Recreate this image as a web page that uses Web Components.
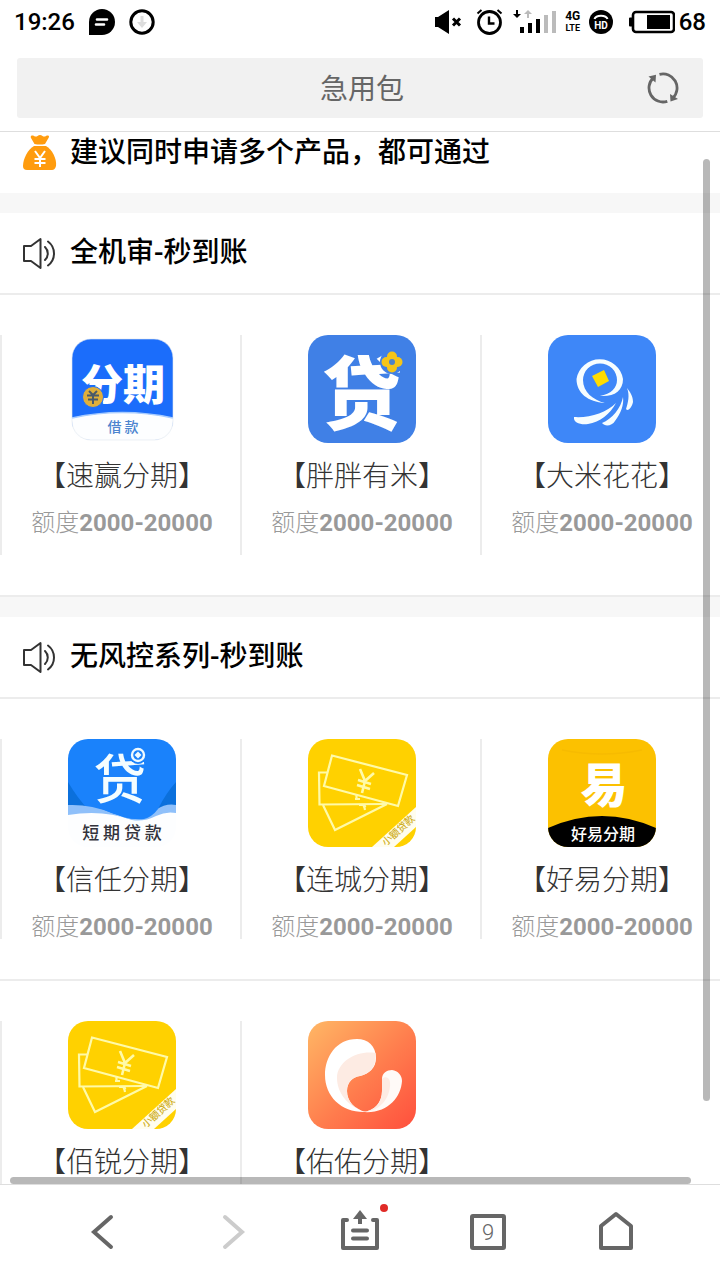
<!DOCTYPE html>
<html lang="zh-CN">
<head>
    <meta charset="UTF-8">
    <meta name="viewport" content="width=device-width, initial-scale=1">
    <title>急用包</title>
    <style>
        body {
            margin: 0;
            background: #fff;
            color: #000;
            font-family: Roboto, "Noto Sans CJK SC", sans-serif;
        }
    </style>
</head>
<body>
    <app-shell>
        <status-bar slot="top"></status-bar>
        <address-bar slot="top">急用包</address-bar>

        <section-title icon="bag">建议同时申请多个产品，都可通过</section-title>

        <loan-section>
            <section-title slot="title" icon="sound">全机审-秒到账</section-title>
            <loan-row class="tall">
                <loan-item logo="fenqi" name="【速赢分期】"></loan-item>
                <loan-item logo="dai" name="【胖胖有米】"></loan-item>
                <loan-item logo="rice" name="【大米花花】"></loan-item>
            </loan-row>
        </loan-section>

        <loan-section>
            <section-title slot="title" icon="sound">无风控系列-秒到账</section-title>
            <loan-row>
                <loan-item logo="shortdai" name="【信任分期】"></loan-item>
                <loan-item logo="notes" name="【连城分期】"></loan-item>
                <loan-item logo="yi" name="【好易分期】"></loan-item>
            </loan-row>
            <loan-row>
                <loan-item logo="notes" name="【佰锐分期】"></loan-item>
                <loan-item logo="swirl" name="【佑佑分期】"></loan-item>
            </loan-row>
        </loan-section>

        <nav-bar slot="bottom"></nav-bar>
    </app-shell>

    <script>
        class AppShell extends HTMLElement {
            constructor() {
                super();
                const shadow = this.attachShadow({ mode: 'open' });

                shadow.innerHTML = `
                    <style>
                        :host {
                            display: flex;
                            flex-direction: column;
                            height: 100vh;
                        }

                        header {
                            border-bottom: 1px solid #dedede;
                        }

                        main {
                            position: relative;
                            flex: 1;
                            min-height: 0;
                            overflow: hidden;
                        }

                        /* scroll thumbs lie over the content */
                        .thumb {
                            position: absolute;
                            border-radius: 4px;
                            background: rgba(0, 0, 0, 0.28);
                        }

                        .thumb.y {
                            top: 27px;
                            right: 10px;
                            bottom: 83px;
                            width: 7px;
                        }

                        .thumb.x {
                            left: 10px;
                            right: 29px;
                            bottom: 0;
                            height: 7px;
                        }
                    </style>

                    <header><slot name="top"></slot></header>
                    <main>
                        <slot></slot>
                        <div class="thumb y"></div>
                        <div class="thumb x"></div>
                    </main>
                    <slot name="bottom"></slot>
                `;
            }
        }

        class StatusBar extends HTMLElement {
            constructor() {
                super();
                const shadow = this.attachShadow({ mode: 'open' });

                shadow.innerHTML = `
                    <style>
                        :host {
                            display: flex;
                            align-items: center;
                            justify-content: space-between;
                            height: 44px;
                            padding: 0 14px;
                            font-size: 24px;
                            font-weight: 500;
                        }

                        .side {
                            display: flex;
                            align-items: center;
                            gap: 4px;
                        }

                        .side.left {
                            gap: 14px;
                        }

                        svg {
                            display: block;
                        }

                        .net {
                            width: 22px;
                            font-size: 12px;
                            font-weight: 700;
                            line-height: 13px;
                            text-align: center;
                        }

                        .net small {
                            display: block;
                            font-size: 9px;
                            line-height: 11px;
                        }
                    </style>

                    <div class="side left">
                        <span>19:26</span>
                        <svg width="26" height="26" viewBox="0 0 26 26">
                            <path d="M0 26V13A13 13 0 1 1 13 26Z"/>
                            <path d="M8 10.500H18M7 15.500H15" stroke="#fff" stroke-width="2.600" stroke-linecap="round"/>
                        </svg>
                        <svg width="26" height="26" viewBox="0 0 26 26">
                            <circle cx="13" cy="13" r="11.200" fill="none" stroke="#000" stroke-width="3"/>
                            <path d="M11.500 7h3v6h3.500l-5 6l-5-6h3.500Z" fill="#ddd"/>
                        </svg>
                    </div>
                    <div class="side">
                        <svg width="32" height="26" viewBox="0 0 32 26">
                            <path d="M1 8H4L15 1V25L4 18H1Z"/>
                            <path d="M19 9.500l7 7M26 9.500l-7 7" stroke="#000" stroke-width="3"/>
                        </svg>
                        <svg width="36" height="26" viewBox="0 0 36 26" fill="none" stroke="#000">
                            <circle cx="19.500" cy="13.500" r="11" stroke-width="2.800"/>
                            <path d="M19 7.500v7h5.500" stroke-width="2.400"/>
                            <path d="M7.500 4.500l4-3.500M31.500 4.500l-4-3.500" stroke-width="2"/>
                        </svg>
                        <svg width="48" height="26" viewBox="0 0 48 26">
                            <path d="M10 18h4v6h-4zM18 14h4v10h-4zM26 10h4v14h-4z"/>
                            <path d="M34 6h4v18h-4zM42 2h4v22h-4z" fill="#bbb"/>
                            <path d="M6 1h2v4h3l-4 4l-4-4h3z"/>
                            <path d="M17 9h2V5h3l-4-4l-4 4h3z" fill="#bbb"/>
                        </svg>
                        <div class="net">4G<small>LTE</small></div>
                        <svg width="26" height="26" viewBox="0 0 26 26">
                            <circle cx="13" cy="13" r="12"/>
                            <path d="M6.500 10C8 5.500 18 5.500 19.500 10" fill="none" stroke="#fff" stroke-width="2"/>
                            <text x="13" y="19.500" fill="#fff" font-family="Roboto, sans-serif" font-size="10" font-weight="700" text-anchor="middle">HD</text>
                        </svg>
                        <svg width="57" height="26" viewBox="0 0 57 26">
                            <rect x="15" y="3" width="41" height="20" rx="3" fill="none" stroke="#000" stroke-width="2.600"/>
                            <path d="M14 8.500h-2q-1 0-1 1v7q0 1 1 1h2zM29 6h23v14h-23z"/>
                        </svg>
                        <span>68</span>
                    </div>
                `;
            }
        }

        class AddressBar extends HTMLElement {
            constructor() {
                super();
                const shadow = this.attachShadow({ mode: 'open' });

                shadow.innerHTML = `
                    <style>
                        :host {
                            display: grid;
                            grid-template-columns: 64px 1fr 64px;
                            align-items: center;
                            height: 60px;
                            margin: 14px 17px 13px;
                            border-radius: 3px;
                            background: #f1f1f1;
                            color: #666;
                        }

                        button {
                            padding: 0;
                            border: 0;
                            background: none;
                            color: inherit;
                            font: inherit;
                        }

                        .title {
                            grid-column: 2;
                            padding: 4px 0 0 4px;
                            font-size: 28px;
                            line-height: 40px;
                        }

                        .reload {
                            height: 60px;
                            padding-right: 16px;
                        }

                        svg {
                            display: block;
                            margin: auto;
                        }
                    </style>

                    <button class="title"><slot></slot></button>
                    <button class="reload" aria-label="刷新">
                        <svg width="32" height="32" viewBox="0 0 32 32" fill="none" stroke="#666" stroke-width="2.800">
                            <path d="M20.300 29.300A14 14 0 0 1 6.600 5.600M12.500 2.400A14 14 0 0 1 25.900 25.900"/>
                            <path d="M1.500 4.500L9 2.700L8.500 10.500Z M31 27L23.500 29.600L23 22Z" fill="#666" stroke="none"/>
                        </svg>
                    </button>
                `;
            }
        }

        const titleIcons = {
            bag: `
                <path d="M9 3C8 1 10 0 12 1Q14 2 15.500 1Q18 -1 20.500 1Q22 2 24 1C26 0 28 1 26.500 3L23 9Q18 10 12.500 9Z" fill="#ff9c0e"/>
                <path d="M12 11H24C30 14 35 24 34 31Q33 35 30 35H5Q1 35 1 31C1 24 6 14 12 11Z" fill="#ff9c0e"/>
                <path d="M13 16l5 7l5-7M18 23v9M12.500 24h11M12.500 28h11" fill="none" stroke="#fff" stroke-width="2"/>
            `,
            sound: `
                <g fill="none" stroke="#333" stroke-width="2" stroke-linejoin="round">
                    <path d="M2 11H9L18.500 4V33L9 26H2Z"/>
                    <path d="M23 12A9 9 0 0 1 23 25M26 6.500A15 15 0 0 1 26 30.500" stroke-linecap="round"/>
                </g>
            `
        };

        class SectionTitle extends HTMLElement {
            constructor() {
                super();
                const shadow = this.attachShadow({ mode: 'open' });

                shadow.innerHTML = `
                    <style>
                        :host {
                            display: block;
                            padding: 2px 22px 21px;
                        }

                        :host([slot="title"]) {
                            padding-top: 21px;
                        }

                        h2 {
                            display: flex;
                            align-items: center;
                            gap: 12px;
                            margin: 0;
                            font-size: 28px;
                            font-weight: 500;
                            line-height: 38px;
                        }

                        svg {
                            flex: none;
                        }
                    </style>

                    <h2>
                        <svg width="36" height="36" viewBox="0 0 36 36">${titleIcons[this.getAttribute('icon')]}</svg>
                        <slot></slot>
                    </h2>
                `;
            }
        }

        class LoanSection extends HTMLElement {
            constructor() {
                super();
                const shadow = this.attachShadow({ mode: 'open' });

                shadow.innerHTML = `
                    <style>
                        :host {
                            display: block;
                            border-top: 20px solid #f7f7f7;
                        }

                        .rows {
                            border-bottom: 2px solid #ececec;
                        }
                    </style>

                    <section>
                        <slot name="title"></slot>
                        <div class="rows"><slot></slot></div>
                    </section>
                `;
            }
        }

        class LoanRow extends HTMLElement {
            constructor() {
                super();
                const shadow = this.attachShadow({ mode: 'open' });

                shadow.innerHTML = `
                    <style>
                        :host {
                            display: grid;
                            grid-template-columns: repeat(3, 1fr);
                            grid-auto-rows: minmax(200px, auto);
                            padding: 40px 0;
                            border-top: 2px solid #ececec;
                        }

                        :host(.tall) {
                            grid-auto-rows: minmax(220px, auto);
                        }
                    </style>

                    <slot></slot>
                `;
            }
        }

        // app logos, all on a 108 x 108 board
        const logos = {
            fenqi: `
                <rect x="4" y="4" width="101" height="101" rx="19" fill="#1b6dfb"/>
                <path d="M4 83Q54 72 105 83V86Q105 105 86 105H23Q4 105 4 86Z" fill="#fdfeff"/>
                <path d="M4 83Q54 72 105 83" fill="none" stroke="#a9cdff" stroke-width="1.500"/>
                <rect x="4" y="4" width="101" height="101" rx="19" fill="none" stroke="#dfe6ee" stroke-width="0.600"/>
                <text x="55" y="65" font-size="42" font-weight="900" fill="#fff" text-anchor="middle">分期</text>
                <circle cx="25" cy="62" r="10.500" fill="#e0af3a" stroke="#1b6dfb"/>
                <path d="M21 56l4 4l4-4M19 60.500h12M20 64.500h10M25 60v9" fill="none" stroke="#4a5a6a" stroke-width="2"/>
                <text x="55" y="97" font-size="14" font-weight="500" fill="#4c84cf" text-anchor="middle">借 款</text>
            `,
            dai: `
                <rect width="108" height="108" rx="20" fill="#4080e6"/>
                <text x="54" y="88" font-size="80" font-weight="900" fill="#fff" text-anchor="middle">贷</text>
                <circle cx="84" cy="27" r="12" fill="#4080e6"/>
                <g fill="#f5c518">
                    <circle cx="84" cy="21.500" r="5"/>
                    <circle cx="84" cy="32.500" r="5"/>
                    <circle cx="78.500" cy="27" r="5"/>
                    <circle cx="89.500" cy="27" r="5"/>
                    <circle cx="84" cy="27" r="7"/>
                </g>
                <circle cx="84" cy="27" r="3" fill="#4d83c8"/>
            `,
            rice: `
                <rect width="108" height="108" rx="20" fill="#3e87f8"/>
                <g fill="#f6fdff">
                    <path d="M57 68C40 67 28.500 58 28.500 44A23.500 23 0 0 1 75 44C75 56 66 62 52 61C63 59 69 53 69 45A17 16.500 0 0 0 35 45C35 57 45 65 57 68Z"/>
                    <path d="M68 68C58 78 42 83 26 82C25 88 33 90 40 89C52 87 62 79 68 68Z"/>
                    <path d="M75 62C73 73 64 84 54 88C57 92 64 91 67 86C73 78 76 70 75 62Z"/>
                    <path d="M79 53C82 60 80 68 78 74C80 77 84 72 85 67C85 61 82 57 79 53Z"/>
                </g>
                <path d="M44 41L56 35L61 46L50 52Z" fill="#ffdc00"/>
            `,
            shortdai: `
                <clipPath id="round"><rect width="108" height="108" rx="20"/></clipPath>
                <g clip-path="url(#round)">
                    <rect width="108" height="108" fill="#fdfeff"/>
                    <path d="M0 0H108V70Q96 66 86 74Q74 84 58 79Q30 68 0 72Z" fill="#1a82fb"/>
                    <path d="M0 43Q10 60 20 70L0 70ZM108 43Q98 54 90 70L108 70Z" fill="#0b70dc"/>
                    <path d="M0 66Q22 65 44 74Q62 82 76 79Q82 77 88 71Q98 64 108 66V74Q98 72 88 77Q76 83 64 81Q34 70 0 76Z" fill="#8fc0fa"/>
                    <path d="M34 70Q60 82 76 80Q84 78 90 70L80 60H34Z" fill="#1a82fb"/>
                </g>
                <text x="52" y="60" font-size="53" font-weight="500" fill="#f4fdff" text-anchor="middle">贷</text>
                <circle cx="70" cy="16" r="9" fill="#1a82fb"/>
                <circle cx="70" cy="16" r="6" fill="none" stroke="#eefaff" stroke-width="2.400"/>
                <path d="M70 12.500l3.500 3.500l-3.500 3.500l-3.500-3.500z" fill="#eefaff"/>
                <text x="54" y="100" font-size="17" font-weight="500" fill="#33333c" text-anchor="middle">短 期 贷 款</text>
            `,
            notes: `
                <clipPath id="round"><rect width="108" height="108" rx="20"/></clipPath>
                <g clip-path="url(#round)">
                    <rect width="108" height="108" fill="#ffd100"/>
                    <g fill="none" stroke="#fffaa8" stroke-width="2.200">
                        <path d="M24 16.500L99 36L90 67L16 47Z"/>
                        <path d="M19 33.500H11L11.500 65.500L79 65"/>
                        <path d="M15 66L27 91L79 65"/>
                        <path d="M48.500 56v4M47 60h5M51 66h5l1 5M55 68l3-1"/>
                        <path d="M52 30l5 12l9-8M57 42l-3 12M50 41l13 4M49 46l13 4" stroke-width="2.600"/>
                    </g>
                    <path d="M64 108L108 68V88L86 108Z" fill="#fffdee"/>
                </g>
                <text x="90" y="95" font-size="10" font-weight="500" fill="#cfae1c" text-anchor="middle" transform="rotate(-42 90 91)">小额贷款</text>
            `,
            yi: `
                <clipPath id="round"><rect width="108" height="108" rx="20"/></clipPath>
                <g clip-path="url(#round)">
                    <rect width="108" height="108" fill="#fcc100"/>
                    <path d="M14 11Q54 19 94 11" fill="none" stroke="#f7bb00" stroke-width="1.500"/>
                    <path d="M0 89Q54 65 108 89V108H0Z"/>
                </g>
                <text x="56" y="63" font-size="47" font-weight="900" fill="#fff" text-anchor="middle">易</text>
                <text x="55" y="101" font-size="16" font-weight="500" fill="#fff" text-anchor="middle">好易分期</text>
            `,
            swirl: `
                <linearGradient id="warm" x1="0" y1="0" x2="1" y2="1">
                    <stop offset="0" stop-color="#ffb765"/>
                    <stop offset="0.500" stop-color="#ff814f"/>
                    <stop offset="1" stop-color="#ff4f3d"/>
                </linearGradient>
                <rect width="108" height="108" rx="20" fill="url(#warm)"/>
                <path d="M49 18C28 18 17 36 17 54C17 76 34 92 58 91C46 88 39 80 39 70C39 61 45 56 52 55C61 53 68 47 68 37C68 25 60 18 49 18Z" fill="#fff"/>
                <path d="M67.500 32C50 29 29 40 29 57C29 72 40 86 58 91C46 88 39 80 39 70C39 61 45 56 52 55C61 53 69 46 67.500 32Z" fill="#fdebe3"/>
                <path d="M55 91C67 90 74 81 74 70V58C74 52 79 49 84 49C90 50 94 54 94 60C93 76 80 93 55 91Z" fill="#fffaf7"/>
                <path d="M55 91C67 90 74 81 74 70V58C78 54 83 57 82 65C81 79 70 91 55 91Z" fill="#fdebe3"/>
            `
        };

        class LoanItem extends HTMLElement {
            constructor() {
                super();
                const shadow = this.attachShadow({ mode: 'open' });

                shadow.innerHTML = `
                    <style>
                        :host {
                            display: block;
                            min-width: 0;
                            padding-left: 2px;
                            border-left: 2px solid #ececec;
                        }

                        a {
                            display: flex;
                            flex-direction: column;
                            align-items: center;
                            gap: 14px;
                            color: #333;
                            text-decoration: none;
                            white-space: nowrap;
                        }

                        svg {
                            width: 108px;
                            height: 108px;
                            overflow: visible;
                        }

                        .name {
                            font-size: 28px;
                            font-weight: 300;
                            line-height: 40px;
                        }

                        .amount {
                            color: #999;
                            font-size: 24px;
                            font-weight: 300;
                            line-height: 24px;
                        }

                        b {
                            font-weight: 700;
                        }
                    </style>

                    <a href="#">
                        <svg viewBox="0 0 108 108" font-family="'Noto Sans CJK SC', sans-serif">${logos[this.getAttribute('logo')]}</svg>
                        <span class="name">${this.getAttribute('name')}</span>
                        <span class="amount">额度<b>2000-20000</b></span>
                    </a>
                `;
            }
        }

        class NavBar extends HTMLElement {
            constructor() {
                super();
                const shadow = this.attachShadow({ mode: 'open' });

                shadow.innerHTML = `
                    <style>
                        :host {
                            display: block;
                            border-top: 1px solid #dedede;
                            background: #fff;
                        }

                        nav {
                            display: grid;
                            grid-template-columns: repeat(5, 1fr);
                            height: 94px;
                            padding: 0 40px 1px;
                        }

                        button {
                            display: flex;
                            align-items: center;
                            justify-content: center;
                            padding: 0;
                            border: 0;
                            background: none;
                            color: #666;
                            font: 22px Roboto, sans-serif;
                        }

                        svg {
                            overflow: visible;
                        }

                        .count {
                            display: flex;
                            align-items: center;
                            justify-content: center;
                            box-sizing: border-box;
                            width: 36px;
                            height: 36px;
                            border: 4px solid #666;
                            border-radius: 3px;
                            font-weight: 300;
                        }
                    </style>

                    <nav>
                        <button aria-label="后退">
                            <svg width="40" height="40" viewBox="0 0 40 40" fill="none" stroke="#666" stroke-width="4" stroke-linecap="round">
                                <path d="M27 5L10 20L27 35"/>
                            </svg>
                        </button>
                        <button aria-label="前进" disabled>
                            <svg width="40" height="40" viewBox="0 0 40 40" fill="none" stroke="#ccc" stroke-width="4" stroke-linecap="round">
                                <path d="M13 5L30 20L13 35"/>
                            </svg>
                        </button>
                        <button aria-label="菜单">
                            <svg width="40" height="40" viewBox="0 0 40 40" fill="none" stroke="#666" stroke-width="4" stroke-linecap="round" stroke-linejoin="round">
                                <path d="M7 8H3V36H37V8H33"/>
                                <path d="M13 18.500H27M13 26.500H27"/>
                                <path d="M20 4V12" stroke-linecap="butt"/>
                                <path d="M20 -2L27 7H13Z" fill="#666" stroke="none"/>
                                <circle cx="44" cy="-4" r="4" fill="#e02b27" stroke="none"/>
                            </svg>
                        </button>
                        <button aria-label="窗口">
                            <span class="count">9</span>
                        </button>
                        <button aria-label="主页">
                            <svg width="40" height="40" viewBox="0 0 40 40" fill="none" stroke="#666" stroke-width="4" stroke-linejoin="round">
                                <path d="M5 14L20 2L35 14V36H5Z"/>
                            </svg>
                        </button>
                    </nav>
                `;
            }
        }

        customElements.define('app-shell', AppShell);
        customElements.define('status-bar', StatusBar);
        customElements.define('address-bar', AddressBar);
        customElements.define('section-title', SectionTitle);
        customElements.define('loan-section', LoanSection);
        customElements.define('loan-row', LoanRow);
        customElements.define('loan-item', LoanItem);
        customElements.define('nav-bar', NavBar);
    </script>
</body>
</html>
